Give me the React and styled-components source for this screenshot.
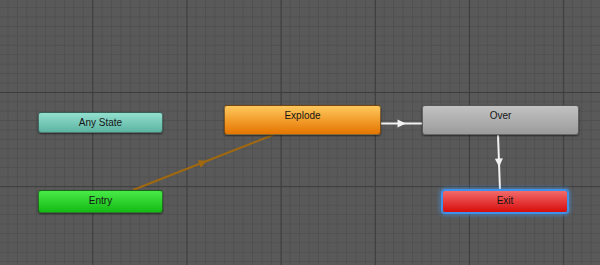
import React from "react";
import styled, { createGlobalStyle, css } from "styled-components";

const GlobalStyle = createGlobalStyle`
  html, body {
    margin: 0;
    padding: 0;
    background: #585858;
  }
`;

const Canvas = styled.div`
  position: relative;
  width: 600px;
  height: 265px;
  overflow: hidden;
  background-color: #595959;
  background-image:
    linear-gradient(to right, #3d3d3d 1px, transparent 1px),
    linear-gradient(to bottom, #3d3d3d 1px, transparent 1px),
    linear-gradient(to right, #505050 1px, transparent 1px),
    linear-gradient(to bottom, #505050 1px, transparent 1px);
  background-size: 94.2px 94.2px, 94.2px 94.2px, 9.42px 9.42px, 9.42px 9.42px;
  background-position: 92.3px 0, 0 92px, 7.5px 0, 0 7.2px;
  font-family: "Liberation Sans", Arial, sans-serif;
`;

const variants = {
  any: css`
    background: linear-gradient(to bottom, #93e0cf, #5db3a1);
  `,
  state: css`
    background: linear-gradient(to bottom, #ffc85c, #f3a232 45%, #e57500);
  `,
  plain: css`
    background: linear-gradient(to bottom, #c2c2c2, #9b9b9b);
  `,
  entry: css`
    background: linear-gradient(to bottom, #48ea48, #14bb14);
  `,
  exit: css`
    background: linear-gradient(to bottom, #f26a6a, #d80c0c);
  `,
};

const Node = styled.div`
  position: absolute;
  box-sizing: border-box;
  left: ${(p) => p.x}px;
  top: ${(p) => p.y}px;
  width: ${(p) => p.w}px;
  height: ${(p) => p.h}px;
  border-radius: 3px;
  border: 1px solid rgba(30, 30, 30, 0.55);
  box-shadow: 0 1px 2px rgba(0, 0, 0, 0.55);
  color: #151515;
  font-size: 10px;
  line-height: 19px;
  text-align: center;
  ${(p) => variants[p.kind]}
  ${(p) =>
    p.selected &&
    css`
      border-color: #3f92ea;
      box-shadow: 0 0 0 1px #3f92ea, 0 0 4px 2px rgba(70, 160, 255, 0.55);
    `}
`;

const Wires = styled.svg`
  position: absolute;
  left: 0;
  top: 0;
  width: 600px;
  height: 265px;
  pointer-events: none;
`;

const Arrow = ({ x1, y1, x2, y2, color }) => {
  const mx = (x1 + x2) / 2;
  const my = (y1 + y2) / 2;
  const angle = (Math.atan2(y2 - y1, x2 - x1) * 180) / Math.PI;
  return (
    <g>
      <line x1={x1} y1={y1} x2={x2} y2={y2} stroke={color} strokeWidth="2" />
      <polygon
        points="-4,-4 4.5,0 -4,4"
        fill={color}
        transform={`translate(${mx} ${my}) rotate(${angle})`}
      />
    </g>
  );
};

export default function App() {
  return (
    <>
      <GlobalStyle />
      <Canvas>
        <Wires viewBox="0 0 600 265">
          <Arrow x1={133} y1={190} x2={273} y2={135} color="#a0680f" />
          <Arrow x1={381} y1={123.5} x2={422} y2={123.5} color="#f2f2f2" />
          <Arrow x1={498} y1={135} x2={500} y2={190} color="#f2f2f2" />
        </Wires>
        <Node kind="any" x={38} y={112} w={125} h={21}>
          Any State
        </Node>
        <Node kind="state" x={224} y={105} w={157} h={30}>
          Explode
        </Node>
        <Node kind="plain" x={422} y={105} w={157} h={30}>
          Over
        </Node>
        <Node kind="entry" x={38} y={190} w={125} h={23}>
          Entry
        </Node>
        <Node kind="exit" x={442} y={190} w={126} h={23} selected>
          Exit
        </Node>
      </Canvas>
    </>
  );
}
